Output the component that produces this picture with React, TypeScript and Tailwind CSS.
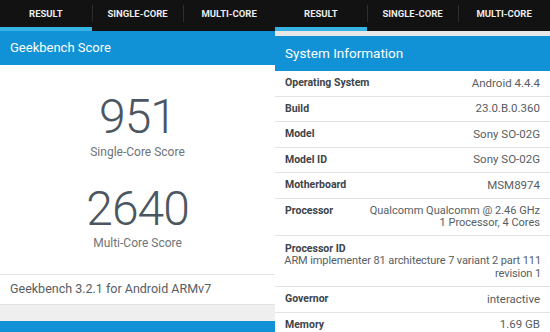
const tabs = ['RESULT', 'SINGLE-CORE', 'MULTI-CORE'];

function TabBar() {
  return (
    <div className="relative flex h-[31px] shrink-0 bg-[#121212]">
      {tabs.map((t, i) => (
        <div key={t} className="relative flex flex-1 items-start justify-center pt-[8px]">
          <span className="text-[9.5px] font-bold leading-[11px] text-[#ececec]">{t}</span>
          {i > 0 && <div className="absolute left-0 top-[5px] h-[17px] w-px bg-[#2e2e2e]" />}
          {i === 0 && <div className="absolute bottom-0 left-0 right-0 h-[4px] bg-[#35b4e4]" />}
        </div>
      ))}
    </div>
  );
}

const rows: { label: string; value: string[]; block?: boolean }[] = [
  { label: 'Operating System', value: ['Android 4.4.4'] },
  { label: 'Build', value: ['23.0.B.0.360'] },
  { label: 'Model', value: ['Sony SO-02G'] },
  { label: 'Model ID', value: ['Sony SO-02G'] },
  { label: 'Motherboard', value: ['MSM8974'] },
  { label: 'Processor', value: ['Qualcomm Qualcomm @ 2.46 GHz', '1 Processor, 4 Cores'] },
  { label: 'Processor ID', value: ['ARM implementer 81 architecture 7 variant 2 part 111', 'revision 1'], block: true },
  { label: 'Governor', value: ['interactive'] },
  { label: 'Memory', value: ['1.69 GB'] },
];

function ScorePanel() {
  return (
    <div className="flex h-[332px] w-[275px] shrink-0 flex-col overflow-hidden bg-white">
      <TabBar />
      <div className="flex h-[34px] shrink-0 items-center bg-[#1192d6] px-[10px] text-[13px] text-white">
        Geekbench Score
      </div>
      <div className="flex h-[209px] shrink-0 flex-col items-center pt-[28px]">
        <div className="text-[48px] font-light leading-[48px] tracking-[-1px] text-[#4b5661]">951</div>
        <div className="mt-[4px] text-[12px] leading-[14px] text-[#6e7479]">Single-Core Score</div>
        <div className="mt-[26px] text-[48px] font-light leading-[48px] tracking-[-1px] text-[#4b5661]">2640</div>
        <div className="mt-[3px] text-[12px] leading-[14px] text-[#6e7479]">Multi-Core Score</div>
      </div>
      <div className="flex h-[31px] shrink-0 items-center border-y border-[#e3e3e3] px-[10px] text-[12.5px] text-[#575d62]">
        Geekbench 3.2.1 for Android ARMv7
      </div>
      <div className="h-[16px] shrink-0 bg-[#efefef]" />
      <div className="flex-1 bg-[#1192d6]" />
    </div>
  );
}

function InfoPanel() {
  return (
    <div className="flex h-[332px] w-[275px] shrink-0 flex-col overflow-hidden bg-white">
      <TabBar />
      <div className="h-[5px] shrink-0 bg-[#e6e6e6]" />
      <div className="flex h-[35px] shrink-0 items-center bg-[#1192d6] px-[10px] text-[13.5px] text-white">
        System Information
      </div>
      {rows.map((r) =>
        r.block ? (
          <div key={r.label} className="shrink-0 border-b border-[#e3e3e3] px-[9px] pb-[6px] pt-[7px] leading-[12.5px]">
            <div className="pl-px text-[10.5px] font-bold text-[#3d4349]">{r.label}</div>
            <div className="text-right text-[#575d62]">
              {r.value.map((v) => (
                <div key={v} className="whitespace-nowrap text-[11px] tracking-[-0.1px]">{v}</div>
              ))}
            </div>
          </div>
        ) : r.value.length > 1 ? (
          <div key={r.label} className="flex shrink-0 justify-between border-b border-[#e3e3e3] px-[10px] pb-[5px] pt-[6px] leading-[12.5px]">
            <div className="text-[10.5px] font-bold text-[#3d4349]">{r.label}</div>
            <div className="text-right text-[11px] text-[#575d62]">
              {r.value.map((v) => (
                <div key={v}>{v}</div>
              ))}
            </div>
          </div>
        ) : (
          <div key={r.label} className="flex h-[25.5px] shrink-0 items-center justify-between border-b border-[#e3e3e3] px-[10px] text-[11.5px]">
            <div className="text-[10.5px] font-bold text-[#3d4349]">{r.label}</div>
            <div className="text-[#575d62]">{r.value[0]}</div>
          </div>
        )
      )}
    </div>
  );
}

export default function App() {
  return (
    <div className="flex h-[332px] w-[550px] overflow-hidden font-['Roboto',sans-serif]">
      <ScorePanel />
      <InfoPanel />
    </div>
  );
}
